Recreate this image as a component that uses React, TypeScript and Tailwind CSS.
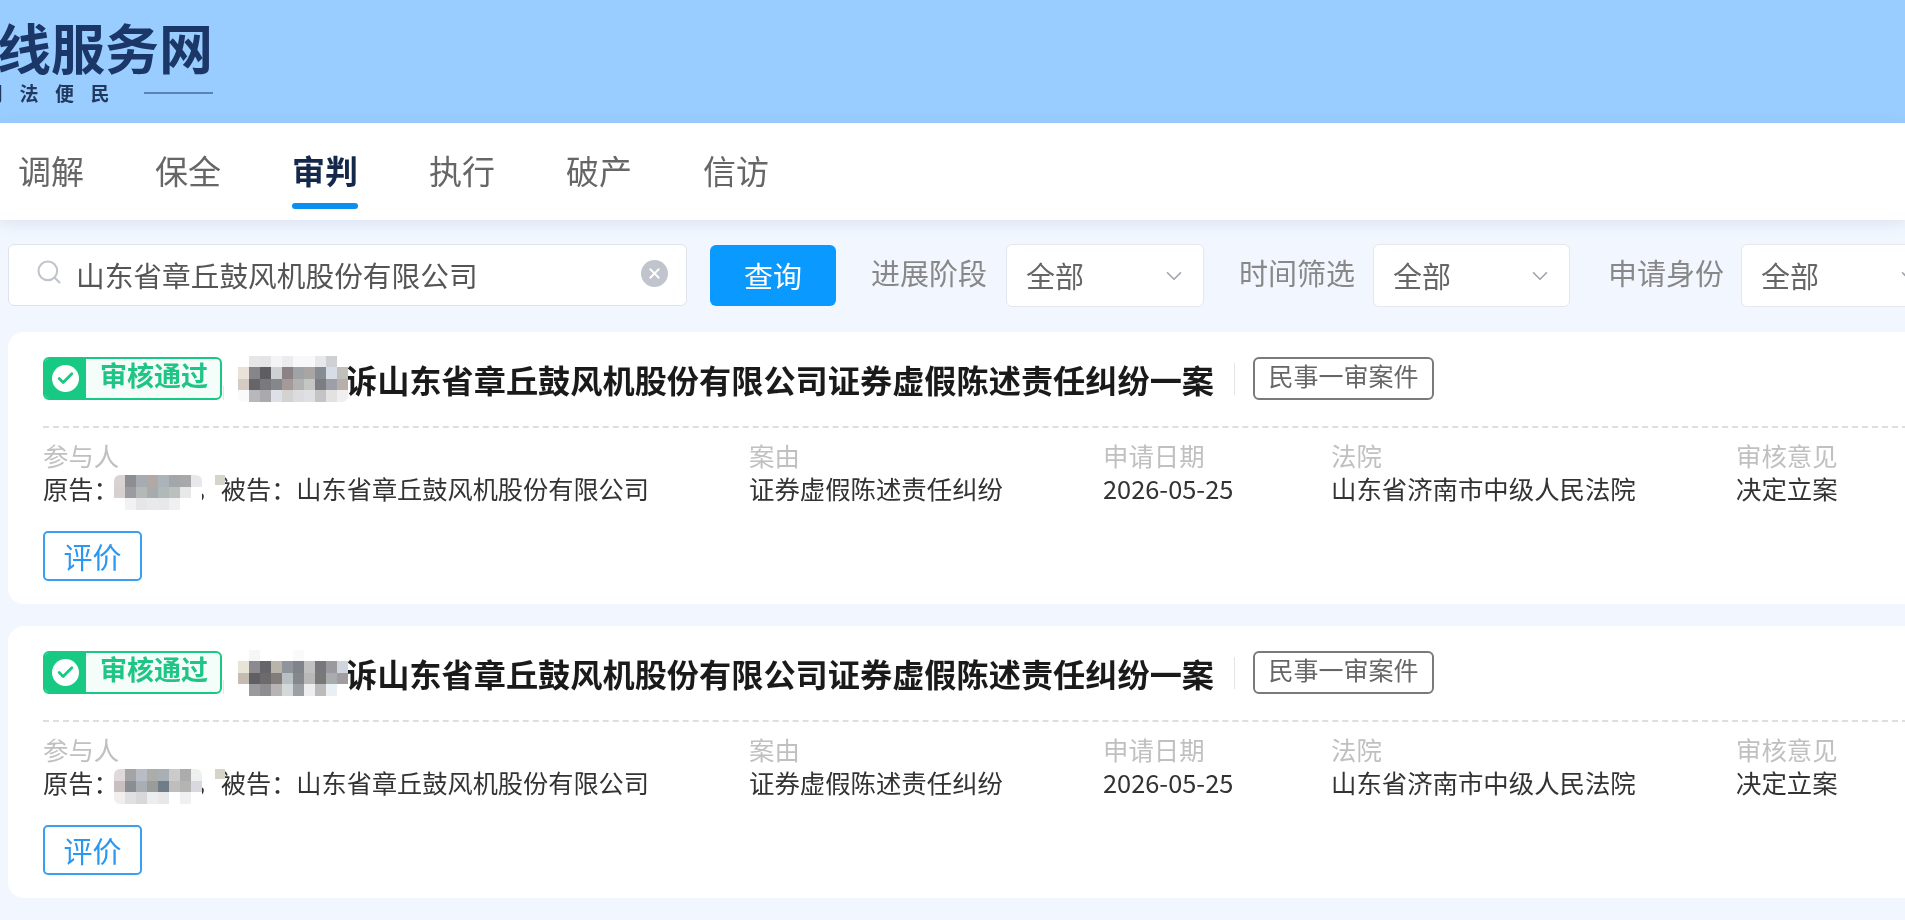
import { ChevronDown, Search, X, Check } from "lucide-react";

const font = "font-['Noto_Sans_CJK_SC','Noto_Sans',sans-serif]";

const M1 = [
  ["#ffffff", "#e6e6e8", "#e4e4e6", "#f4f4f6", "#ececec", "#f8f8fa", "#f8f8fa", "#e8e8ea", "#cfd0d3", "#ffffff"],
  ["#e8e2d8", "#86868a", "#5e5e62", "#cfd0d4", "#8a8285", "#a0a3a5", "#aaa5a5", "#868c92", "#d8dce6", "#c0bfba"],
  ["#d6cbc2", "#666669", "#7a7a7e", "#85888b", "#a59a98", "#b2b2b2", "#c4c6c4", "#7d7d84", "#9ca0a6", "#b8aeac"],
  ["#fafafa", "#b8b8ba", "#aaaaac", "#dedfe8", "#d4d2d0", "#dcdcde", "#e0e0e4", "#c4c4c6", "#e4e2e0", "#efefef"],
];
const M2 = [
  ["#d8d2d2", "#8e8e92", "#a6acb2", "#b2a8a6", "#aab4ba", "#a4a6aa", "#a8a8aa", "#e8e8ec"],
  ["#d8d0ce", "#9a9ca0", "#b4b8b6", "#a6acac", "#b0b8b8", "#bcc0bc", "#e8e8e8", "#ffffff"],
  ["#ffffff", "#f2f2f4", "#e6e6e8", "#e8eaea", "#e8e8ea", "#f0f0f0", "#ffffff", "#ffffff"],
];
const M3 = [
  ["#ffffff", "#f6f6f4", "#ffffff", "#ffffff", "#ffffff", "#fafafa", "#ffffff", "#ffffff", "#ffffff", "#ffffff"],
  ["#e8e4d8", "#8c8a8e", "#66666a", "#b8b4aa", "#90949c", "#80848a", "#c0c0c0", "#76767c", "#9a9a9e", "#d0d4dc"],
  ["#c4bcb0", "#606064", "#6e6a6c", "#827c7c", "#b8c0c2", "#84888c", "#b8b8b8", "#787878", "#a8acac", "#a09ca0"],
  ["#ffffff", "#9a9a9e", "#8e8e90", "#b8b4b4", "#d4d8d8", "#9aa0a4", "#eceef0", "#bcbaba", "#e8f0f4", "#ffffff"],
];
const M4 = [
  ["#e0d8da", "#a4a4a6", "#b8bcc4", "#acacaa", "#a8b0b4", "#cccaca", "#acacac", "#eef0f0"],
  ["#c8bfc0", "#8a8e92", "#a8aeb2", "#9a9c9c", "#707c88", "#c0bebc", "#b4b4b4", "#d8d8e0"],
  ["#f2eeee", "#e0e0e2", "#d8d8da", "#ecedee", "#e8e8ea", "#ffffff", "#f0f0f2", "#ffffff"],
];

function Mosaic({ rows, className }: { rows: string[][]; className?: string }) {
  return (
    <div className={`flex flex-col overflow-hidden rounded-md blur-[0.5px] ${className ?? ""}`}>
      {rows.map((row, i) => (
        <div key={i} className="flex">
          {row.map((c, j) => (
            <div key={j} className="w-[11px] h-[11.5px]" style={{ backgroundColor: c }} />
          ))}
        </div>
      ))}
    </div>
  );
}

function Select({ width }: { width: string }) {
  return (
    <div className={`${width} h-[63px] shrink-0 bg-white rounded-md border border-[#e4e7ed] flex items-center justify-between pl-[19px] pr-[16px] text-[29px] text-[#666666]`}>
      <span>全部</span>
      <ChevronDown className="w-[26px] h-[26px] text-[#a0a3aa]" strokeWidth={1.5} />
    </div>
  );
}

function Col({ label, children }: { label: string; children: React.ReactNode }) {
  return (
    <div className="text-[25.4px] leading-[33px]">
      <div className="text-[#c0c0c0]">{label}</div>
      <div className="text-[#333333] whitespace-nowrap relative">{children}</div>
    </div>
  );
}

function Card({ titleMosaic, nameMosaic }: { titleMosaic: string[][]; nameMosaic: string[][] }) {
  return (
    <div className="w-[1960px] h-[272px] bg-white rounded-[16px] pl-[35px] pt-[25px]">
      <div className="flex items-center h-[43px]">
        <div className="w-[179px] h-[43px] flex rounded-[6px] border-2 border-[#17c983] bg-[#f4fdf9] overflow-hidden shrink-0">
          <div className="w-[41px] bg-[#17c983] flex items-center justify-center shrink-0">
            <div className="w-[27px] h-[27px] rounded-full bg-white flex items-center justify-center">
              <Check className="w-[19px] h-[19px] text-[#17c983]" strokeWidth={3.5} />
            </div>
          </div>
          <span className="ml-[14px] text-[27px] leading-[32px] font-bold text-[#1fc585] whitespace-nowrap">审核通过</span>
        </div>
        <div className="ml-[1px] w-px h-[14px] self-end bg-[#d5efe6] shrink-0" />
        <Mosaic rows={titleMosaic} className="ml-[14px] shrink-0 z-10" />
        <span className="ml-[-3px] text-[32.2px] leading-[38px] font-bold text-[#1a1a1a] whitespace-nowrap">
          诉山东省章丘鼓风机股份有限公司证券虚假陈述责任纠纷一案
        </span>
        <div className="ml-[20px] w-px h-[32px] bg-[#e4e4e4]" />
        <div className="ml-[18px] w-[181px] h-[43px] rounded-[6px] border-2 border-[#7a7a7a] text-[#666666] text-[25px] leading-[33px] text-center whitespace-nowrap">
          民事一审案件
        </div>
      </div>
      <div className="mt-[26px] border-t-2 border-dashed border-[#dedede]" />
      <div className="mt-[11px] grid grid-cols-[706px_354px_228px_405px_1fr]">
        <Col label="参与人">
          <span className="text-[25.2px]">
            原告：
            <span className="inline-block w-[77px]" />
            ，被告：山东省章丘鼓风机股份有限公司
          </span>
          <Mosaic rows={nameMosaic} className="absolute left-[71px] top-[3px]" />
          <span className="absolute left-[172px] top-[3px] w-[10px] h-[10px] bg-[#d6d4c8]" />
        </Col>
        <Col label="案由">证券虚假陈述责任纠纷</Col>
        <Col label="申请日期">2026-05-25</Col>
        <Col label="法院">山东省济南市中级人民法院</Col>
        <Col label="审核意见">决定立案</Col>
      </div>
      <button className="mt-[26px] w-[99px] h-[50px] rounded-[5px] border-2 border-[#3a9ff0] text-[#2a97f0] text-[29px] leading-none">
        评价
      </button>
    </div>
  );
}

export default function App() {
  const tabs = ["调解", "保全", "审判", "执行", "破产", "信访"];
  return (
    <div className={`w-[1905px] h-[920px] overflow-hidden bg-[#f2f7ff] blur-[0.35px] ${font}`}>
      <header className="h-[123px] bg-[#99ccff]">
        <div className="w-[213px] pt-[20px] overflow-hidden flex flex-col items-end">
          <div className="text-[54px] leading-[54px] font-bold text-[#1a3768] whitespace-nowrap">在线服务网</div>
          <div className="mt-[9px] h-[20px] flex items-center whitespace-nowrap">
            <span className="text-[19px] leading-[20px] font-bold text-[#22395f] tracking-[16.5px]">司法便民</span>
            <span className="ml-[18px] w-[69px] h-[2px] bg-[#5b82b5]" />
          </div>
        </div>
      </header>

      <nav className="relative h-[97px] bg-white pl-[18px] flex gap-[71px] shadow-[0_4px_14px_rgba(90,110,150,0.14)]">
        {tabs.map((t) => (
          <div key={t} className="pt-[25px] flex flex-col items-center">
            <span className={`text-[33px] leading-[44px] ${t === "审判" ? "font-bold text-[#14284b]" : "text-[#666666]"}`}>{t}</span>
            {t === "审判" && <span className="mt-[11px] w-[66px] h-[6px] rounded-full bg-[#0a8fef]" />}
          </div>
        ))}
      </nav>

      <div className="h-[112px] pt-[24px] pl-[8px] flex items-start">
        <div className="w-[679px] h-[62px] shrink-0 bg-white rounded-md border border-[#dfe3ea] flex items-center pl-[26px] pr-[18px]">
          <Search className="w-[28px] h-[28px] text-[#c0c4cc] -mt-[6px]" strokeWidth={1.8} />
          <span className="ml-[13px] flex-1 text-[28.7px] text-[#555555] whitespace-nowrap">山东省章丘鼓风机股份有限公司</span>
          <span className="w-[27px] h-[27px] rounded-full bg-[#c0c4cc] flex items-center justify-center -mt-[4px]">
            <X className="w-[17px] h-[17px] text-white" strokeWidth={2.5} />
          </span>
        </div>
        <button className="ml-[23px] mt-[1px] w-[126px] h-[61px] shrink-0 rounded-[6px] bg-[#0a99ff] text-white text-[29px]">查询</button>
        <span className="ml-[35px] w-[117px] shrink-0 text-[29px] leading-[56px] text-[#888888] whitespace-nowrap">进展阶段</span>
        <span className="ml-[18px]"><Select width="w-[198px]" /></span>
        <span className="ml-[35px] w-[116px] shrink-0 text-[29px] leading-[56px] text-[#888888] whitespace-nowrap">时间筛选</span>
        <span className="ml-[18px]"><Select width="w-[197px]" /></span>
        <span className="ml-[38px] w-[115px] shrink-0 text-[29px] leading-[56px] text-[#888888] whitespace-nowrap">申请身份</span>
        <span className="ml-[18px]"><Select width="w-[198px]" /></span>
      </div>

      <main className="pl-[8px] flex flex-col gap-[22px]">
        <Card titleMosaic={M1} nameMosaic={M2} />
        <Card titleMosaic={M3} nameMosaic={M4} />
      </main>
    </div>
  );
}
